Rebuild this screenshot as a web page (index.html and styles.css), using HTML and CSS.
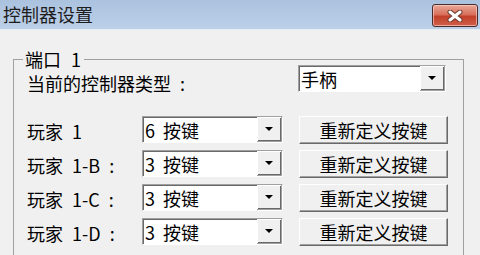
FILE: index.html
```html
<!DOCTYPE html>
<html>

<head>
    <meta charset="utf-8">
    <title>控制器设置</title>
    <link rel="stylesheet" href="styles.css">
</head>

<body>
    <div class="window">
        <div class="titlebar">
            <span class="title">控制器设置</span>
            <a href="javascript:;" class="close">
                <svg width="18" height="12" viewBox="0 0 18 12">
                    <path d="M4 2 L14 10 M14 2 L4 10" stroke="#6a3a32" stroke-width="5" stroke-linecap="round"/>
                    <path d="M4 2 L14 10 M14 2 L4 10" stroke="#fff" stroke-width="3" stroke-linecap="round"/>
                </svg>
            </a>
        </div>
        <div class="panel">
            <fieldset class="group">
                <legend>端口 1</legend>
                <div class="row first">
                    <span class="label wide">当前的控制器类型 :</span>
                    <div class="combo big">
                        <span class="value">手柄</span>
                        <span class="arrow"><i></i></span>
                    </div>
                </div>
                <div class="players">
                    <div class="row">
                        <span class="label">玩家 1</span>
                        <div class="combo">
                            <span class="value">6 按键</span>
                            <span class="arrow"><i></i></span>
                        </div>
                        <a href="javascript:;" class="btn">重新定义按键</a>
                    </div>
                    <div class="row">
                        <span class="label">玩家 1-B :</span>
                        <div class="combo">
                            <span class="value">3 按键</span>
                            <span class="arrow"><i></i></span>
                        </div>
                        <a href="javascript:;" class="btn">重新定义按键</a>
                    </div>
                    <div class="row">
                        <span class="label">玩家 1-C :</span>
                        <div class="combo">
                            <span class="value">3 按键</span>
                            <span class="arrow"><i></i></span>
                        </div>
                        <a href="javascript:;" class="btn">重新定义按键</a>
                    </div>
                    <div class="row">
                        <span class="label">玩家 1-D :</span>
                        <div class="combo">
                            <span class="value">3 按键</span>
                            <span class="arrow"><i></i></span>
                        </div>
                        <a href="javascript:;" class="btn">重新定义按键</a>
                    </div>
                </div>
            </fieldset>
        </div>
    </div>
</body>

</html>
```

FILE: styles.css
```css
* {
    margin: 0;
    padding: 0;
    box-sizing: border-box;
    text-decoration: none;
}

body {
    width: 480px;
    height: 255px;
    overflow: hidden;
    background-color: #f0f0f0;
    font-family: "Noto Sans CJK SC", sans-serif;
    font-size: 18px;
    color: #000;
}

.window {
    height: 255px;
    overflow: hidden;
}

.titlebar {
    height: 30px;
    display: flex;
    justify-content: space-between;
    align-items: flex-start;
    padding: 0 2px 0 3px;
    background: linear-gradient(#abc2df, #bcd0e8);
    border-bottom: 1px solid #e6edf5;
}

.title {
    line-height: 29px;
    color: #1c1c1c;
}

.close {
    margin-top: 4px;
    width: 46px;
    height: 23px;
    display: flex;
    align-items: center;
    justify-content: center;
    border: 1px solid #4a2a2a;
    border-radius: 3px;
    background: linear-gradient(#e9a898, #d8705c 45%, #c2402a 55%, #d0604a);
    box-shadow: inset 0 0 0 1px rgba(255, 220, 210, 0.6);
}

.panel {
    padding: 20px 0 0 13px;
}

.group {
    width: 451px;
    height: 205px;
    border: 1px solid #a0a0a0;
    border-bottom: none;
    padding: 0 13px;
}

.group legend {
    margin-left: -4px;
    padding: 0 3px 0 2px;
    line-height: 18px;
    word-spacing: 6px;
}

.row {
    display: flex;
    align-items: center;
    height: 27px;
}

.row.first {
    margin-top: -3px;
    align-items: flex-start;
}

.label {
    width: 115px;
    white-space: pre;
    word-spacing: 5px;
    padding-top: 3px;
    line-height: 20px;
}

.label.wide {
    width: 271px;
    padding-top: 8px;
}

.players {
    margin-top: 24px;
    display: flex;
    flex-direction: column;
    gap: 7px;
}

.combo {
    width: 141px;
    height: 27px;
    display: flex;
    background-color: #fff;
    border: 1px solid;
    border-color: #a0a0a0 #fff #fff #a0a0a0;
    box-shadow: inset 1px 1px #696969;
}

.combo.big {
    width: 148px;
}

.combo .value {
    flex: 1;
    padding: 2px 0 0 2px;
    line-height: 22px;
    word-spacing: 4px;
}

.combo .arrow {
    width: 25px;
    display: flex;
    align-items: center;
    justify-content: center;
    background-color: #f0f0f0;
    box-shadow: inset 1px 1px #fff, inset -1px -1px #696969;
    border-right: 1px solid #a0a0a0;
    border-bottom: 1px solid #a0a0a0;
}

.combo .arrow i {
    width: 0;
    height: 0;
    border-left: 4px solid transparent;
    border-right: 4px solid transparent;
    border-top: 4px solid #000;
}

.btn {
    margin-left: 16px;
    width: 149px;
    height: 28px;
    margin-top: 1px;
    display: flex;
    align-items: center;
    justify-content: center;
    color: #000;
    background-color: #f0f0f0;
    border: 1px solid;
    border-color: #fff #696969 #696969 #fff;
    box-shadow: inset -1px -1px #a0a0a0;
    line-height: 20px;
}
```
